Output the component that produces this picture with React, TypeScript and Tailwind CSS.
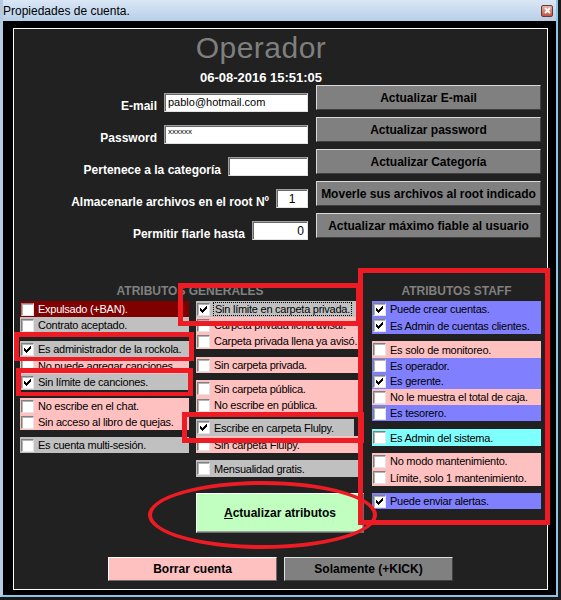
import React from "react";

type RowProps = {
  label: string;
  bg: string;
  h: string;
  checked?: boolean;
  white?: boolean;
  focus?: boolean;
  w?: string;
};

function Check() {
  // classic 7x7 windows tick
  const tops = [2, 3, 4, 3, 2, 1, 0];
  return (
    <svg width="7" height="7" viewBox="0 0 7 7" shapeRendering="crispEdges">
      {tops.map((t, i) => (
        <rect key={i} x={i} y={t} width="1" height="3" fill="#000" />
      ))}
    </svg>
  );
}

function Box({ checked }: { checked?: boolean }) {
  return (
    <span className="w-[13px] h-[13px] shrink-0 flex items-center justify-center bg-white border border-t-[#808080] border-l-[#808080] border-r-[#e4e4e4] border-b-[#e4e4e4] shadow-[inset_1px_1px_0_#b4b4b4]">
      {checked && <Check />}
    </span>
  );
}

function Row({ label, bg, h, checked, white, focus, w }: RowProps) {
  return (
    <div className={`flex items-center gap-[4px] pl-[1px] overflow-hidden ${bg} ${h} ${w ?? "w-full"}`}>
      <Box checked={checked} />
      <span
        className={`text-[11px] leading-[12px] tracking-[-0.25px] whitespace-nowrap ${white ? "text-white" : "text-black"} ${
          focus ? "outline outline-1 outline-dotted outline-black px-[1px]" : ""
        }`}
      >
        {label}
      </span>
    </div>
  );
}

const pink = "bg-[#ffc0c0]";
const gray = "bg-[#c0c0c0]";
const blue = "bg-[#8080ff]";

function FormRow({ label, field, button }: { label: string; field: React.ReactNode; button: string }) {
  return (
    <div className="flex gap-[8px] h-[32px]">
      <div className="w-[294px] h-[27px] flex justify-end items-end gap-[7px]">
        <span className="text-[12px] leading-[12px] font-bold text-white whitespace-nowrap">{label}</span>
        {field}
      </div>
      <div className="w-[225px] h-[25px] flex items-center justify-center bg-[#808080] border border-t-[#d8d8d8] border-l-[#d8d8d8] border-r-[#404040] border-b-[#404040] text-[12px] font-bold text-black whitespace-nowrap">
        {button}
      </div>
    </div>
  );
}

const fieldBase =
  "h-[19px] bg-white border border-t-[#a0a0a0] border-l-[#a0a0a0] border-r-[#e3e3e3] border-b-[#e3e3e3] shadow-[inset_1px_1px_0_#6a6a6a] flex items-center text-black";

export default function App() {
  return (
    <div className="relative w-[561px] h-[600px] overflow-hidden bg-[#1a1a1a] font-['Liberation_Sans',Arial,sans-serif]">
      <div className="flex flex-col w-[558px] h-[597px] bg-black border-l-[3px] border-r-2 border-b-2 border-l-[#b6cbe0] border-r-[#8cc4e8] border-b-[#8cc4e8]">
        {/* title bar */}
        <div className="h-[21px] shrink-0 flex items-center justify-between pr-[3px] bg-linear-to-b from-[#dae7f5] to-[#b7cfe8]">
          <span className="text-[12px] leading-none text-black">Propiedades de cuenta.</span>
          <div className="w-[12px] h-[12px] rounded-[2px] border border-[#6b3a33] bg-linear-to-b from-[#e6b0a4] to-[#c25444] flex items-center justify-center">
            <svg width="7" height="7" viewBox="0 0 7 7">
              <path d="M1 1L6 6M6 1L1 6" stroke="#fff" strokeWidth="1.8" />
            </svg>
          </div>
        </div>

        <div className="flex-1 pl-[10px] pt-[7px]">
          <div className="w-[535px] h-[562px] border border-white bg-[#212121] flex flex-col">
            <div className="mt-[4px] w-[494px] text-center text-[30px] leading-[30px] tracking-[0.5px] text-[#7f7f7f]">
              Operador
            </div>
            <div className="mt-[8px] w-[494px] text-center text-[13px] leading-[13px] font-bold text-white">
              06-08-2016 15:51:05
            </div>

            <div className="mt-[1px] flex flex-col">
              <FormRow
                label="E-mail"
                button="Actualizar E-mail"
                field={<div className={`${fieldBase} w-[144px] pl-[3px] text-[11px]`}>pablo@hotmail.com</div>}
              />
              <FormRow
                label="Password"
                button="Actualizar password"
                field={
                  <div className={`${fieldBase} w-[144px] pl-[3px] items-start pt-[2px] text-[8px] leading-[8px]`}>
                    xxxxxx
                  </div>
                }
              />
              <FormRow
                label="Pertenece a la categoría"
                button="Actualizar Categoría"
                field={<div className={`${fieldBase} w-[80px]`} />}
              />
              <FormRow
                label="Almacenarle archivos en el root Nº"
                button="Moverle sus archivos al root indicado"
                field={<div className={`${fieldBase} w-[32px] justify-center text-[12px]`}>1</div>}
              />
              <FormRow
                label="Permitir fiarle hasta"
                button="Actualizar máximo fiable al usuario"
                field={<div className={`${fieldBase} w-[56px] justify-end pr-[3px] text-[12px]`}>0</div>}
              />
            </div>

            {/* attributes */}
            <div className="mt-[40px] flex pl-[6px] gap-[12px]">
              <div className="w-[340px] flex flex-col">
                <div className="text-center text-[12px] leading-[12px] font-bold text-[#808080]">ATRIBUTOS GENERALES</div>
                <div className="mt-[4px] flex gap-[7px] items-start">
                  <div className="w-[169px] flex flex-col">
                    <Row label="Expulsado (+BAN)." bg="bg-[#800000]" h="h-[16px]" white />
                    <Row label="Contrato aceptado." bg={gray} h="h-[16px]" />
                    <div className="mt-[8px]" />
                    <Row label="Es administrador de la rockola." bg={gray} h="h-[16px]" checked />
                    <Row label="No puede agregar canciones." bg={pink} h="h-[17px]" />
                    <Row label="Sin límite de canciones." bg={gray} h="h-[16px]" checked />
                    <div className="mt-[8px]" />
                    <Row label="No escribe en el chat." bg={pink} h="h-[16px]" />
                    <Row label="Sin acceso al libro de quejas." bg={pink} h="h-[16px]" />
                    <div className="mt-[7px]" />
                    <Row label="Es cuenta multi-sesión." bg={gray} h="h-[16px]" />
                  </div>
                  <div className="w-[164px] flex flex-col">
                    <Row label="Sin límite en carpeta privada." bg={gray} h="h-[16px]" checked focus />
                    <Row label="Carpeta privada llena avisar." bg={pink} h="h-[16px]" />
                    <Row label="Carpeta privada llena ya avisó." bg={pink} h="h-[16px]" />
                    <div className="mt-[8px]" />
                    <Row label="Sin carpeta privada." bg={pink} h="h-[16px]" />
                    <div className="mt-[7px]" />
                    <Row label="Sin carpeta pública." bg={pink} h="h-[17px]" />
                    <Row label="No escribe en pública." bg={pink} h="h-[16px]" />
                    <div className="mt-[6px]" />
                    <Row label="Escribe en carpeta Flulpy." bg={gray} h="h-[17px]" w="w-[158px]" checked />
                    <Row label="Sin carpeta Flulpy." bg={pink} h="h-[17px]" />
                    <div className="mt-[7px]" />
                    <Row label="Mensualidad gratis." bg={gray} h="h-[17px]" />
                    <div className="mt-[16px] w-[168px] h-[40px] shrink-0 flex items-center justify-center bg-[#c0ffc0] border border-t-white border-l-white border-r-[#6a6a6a] border-b-[#6a6a6a] shadow-[inset_-1px_-1px_0_#a0a0a0] text-[12px] font-bold text-black">
                      <span>
                        <span className="underline">A</span>ctualizar atributos
                      </span>
                    </div>
                  </div>
                </div>
              </div>

              <div className="w-[169px] flex flex-col">
                <div className="text-center text-[12px] leading-[12px] font-bold text-[#808080]">ATRIBUTOS STAFF</div>
                <div className="mt-[4px] flex flex-col">
                  <Row label="Puede crear cuentas." bg={blue} h="h-[16px]" checked />
                  <Row label="Es Admin de cuentas clientes." bg={blue} h="h-[17px]" checked />
                  <div className="mt-[7px]" />
                  <Row label="Es solo de monitoreo." bg={pink} h="h-[17px]" />
                  <Row label="Es operador." bg={blue} h="h-[15px]" />
                  <Row label="Es gerente." bg={blue} h="h-[16px]" checked />
                  <Row label="No le muestra el total de caja." bg={pink} h="h-[16px]" />
                  <Row label="Es tesorero." bg={blue} h="h-[16px]" />
                  <div className="mt-[8px]" />
                  <Row label="Es Admin del sistema." bg="bg-[#80ffff]" h="h-[17px]" />
                  <div className="mt-[7px]" />
                  <Row label="No modo mantenimiento." bg={pink} h="h-[16px]" />
                  <Row label="Límite, solo 1 mantenimiento." bg={pink} h="h-[17px]" />
                  <div className="mt-[7px]" />
                  <Row label="Puede enviar alertas." bg={blue} h="h-[16px]" checked />
                </div>
              </div>
            </div>

            <div className="mt-[24px] flex pl-[94px] gap-[7px]">
              <div className="w-[169px] h-[24px] flex items-center justify-center bg-[#ffc0c0] border border-t-white border-l-white border-r-[#6a6a6a] border-b-[#6a6a6a] text-[12px] font-bold text-black">
                Borrar cuenta
              </div>
              <div className="w-[169px] h-[24px] flex items-center justify-center bg-[#808080] border border-t-[#e0e0e0] border-l-[#e0e0e0] border-r-[#404040] border-b-[#404040] text-[12px] font-bold text-black">
                Solamente (+KICK)
              </div>
            </div>
          </div>
        </div>
      </div>

      {/* red annotations drawn over the screenshot */}
      <div className="absolute left-[14px] top-[332px] w-[180px] h-[29px] border-[5px] border-b-[4px] border-[#ed1c24]" />
      <div className="absolute left-[16px] top-[368px] w-[177px] h-[28px] border-[5px] border-b-[4px] border-[#ed1c24]" />
      <div className="absolute left-[178px] top-[283px] w-[183px] h-[43px] border-[5px] border-[#ed1c24]" />
      <div className="absolute left-[182px] top-[412px] w-[182px] h-[31px] border-[5px] border-[#ed1c24]" />
      <div className="absolute left-[358px] top-[268px] w-[192px] h-[257px] border-[5px] border-[#ed1c24]" />
      <div className="absolute left-[148px] top-[481px] w-[229px] h-[68px] rounded-[50%] border-4 border-[#ed1c24]" />
    </div>
  );
}
